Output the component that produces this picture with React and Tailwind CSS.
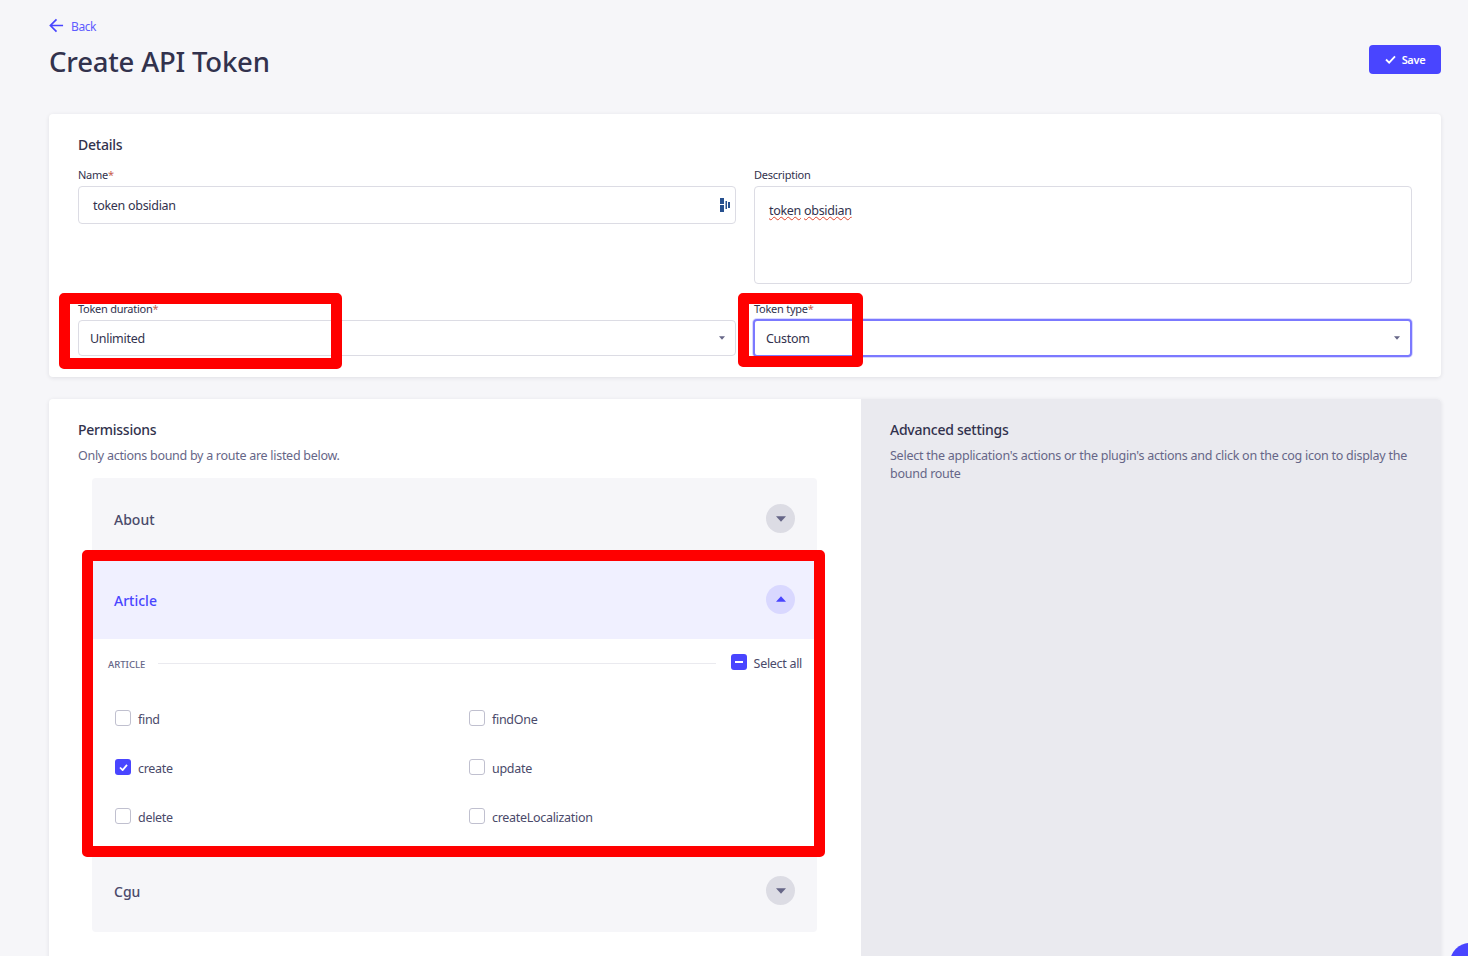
import React from 'react';

const Caret = ({ up = false, className = '' }) => (
  <svg viewBox="0 0 14 8" className={className} fill="currentColor">
    {up ? <path d="M7 0l7 8H0z" /> : <path d="M7 8L0 0h14z" />}
  </svg>
);

const Field = ({ label, required, children }) => (
  <div className="flex flex-col">
    <label className="text-[11px] tracking-[-0.25px] leading-[16px] text-[#32324d] mb-[3px]">
      {label}
      {required && <span className="text-[#c9614f]">*</span>}
    </label>
    {children}
  </div>
);

const SelectBox = ({ value, focused }) => (
  <div
    className={
      focused
        ? 'h-[38px] -mt-px -ml-px rounded-[4px] border-2 border-[#7b79ff] bg-white flex items-center justify-between pl-[11px] pr-[10px] shadow-[0_0_0_1px_#d9d8ff]'
        : 'h-[36px] rounded-[4px] border border-[#dcdce4] bg-white flex items-center justify-between pl-[11px] pr-[10px]'
    }
  >
    <span className="text-[12.500px] tracking-[-0.3px] pt-[3px] text-[#32324d]">{value}</span>
    <Caret className="w-[6px] h-[4px] text-[#666687]" />
  </div>
);

const AccordionRow = ({ title, open, last }) => (
  <div
    className={
      (open ? 'bg-[#f0f0ff] h-[78px] ' : 'bg-[#f6f6f9] ') +
      (last ? 'h-[79px] pb-[2px] rounded-b-[4px] ' : !open ? 'h-[83px] rounded-t-[4px] ' : '') +
      'flex items-center justify-between pl-[22px] pr-[22px]'
    }
  >
    <span className={(open ? 'text-[#4945ff] ' : 'text-[#4a4a6a] ') + 'text-[14px] font-medium'}>{title}</span>
    <span
      className={
        (open ? 'bg-[#d9d8ff] text-[#4945ff] ' : 'bg-[#dcdce4] text-[#666687] ') +
        'mb-[2px] w-[29px] h-[29px] rounded-full flex items-center justify-center'
      }
    >
      <Caret up={open} className="w-[10px] h-[6px]" />
    </span>
  </div>
);

const Check = ({ label, checked }) => (
  <div className="flex items-center gap-[7px] h-[49px]">
    {checked ? (
      <span className="mb-[3px] w-[16px] h-[16px] rounded-[3px] bg-[#4945ff] flex items-center justify-center">
        <svg viewBox="0 0 10 8" className="w-[9px] h-[7px]" fill="none" stroke="#fff" strokeWidth="2">
          <path d="M1 4l3 3 5-6" />
        </svg>
      </span>
    ) : (
      <span className="mb-[3px] w-[16px] h-[16px] rounded-[3px] border border-[#c0c0cf] bg-white" />
    )}
    <span className="text-[12.500px] tracking-[-0.3px] pt-[2px] text-[#4a4a6a]">{label}</span>
  </div>
);

const actions = [
  { label: 'find' },
  { label: 'findOne' },
  { label: 'create', checked: true },
  { label: 'update' },
  { label: 'delete' },
  { label: 'createLocalization' },
];

export default function App() {
  return (
    <div className="relative h-[956px] overflow-hidden bg-[#f6f6f9] font-['Noto_Sans',sans-serif]">
      {/* header */}
      <div className="pl-[49px] pr-[27px] pt-[17px] h-[114px]">
        <div className="flex items-center gap-[7px] h-[18px] text-[#4945ff]">
          <svg viewBox="0 0 16 16" className="w-[15px] h-[15px] -mt-[2px]" fill="none" stroke="currentColor" strokeWidth="1.8">
            <path d="M15 8H1.500M8 1.500L1.500 8 8 14.500" />
          </svg>
          <span className="text-[12px] tracking-[-0.4px] text-[#5f5cff] pt-[2px]">Back</span>
        </div>
        <div className="flex items-start justify-between">
          <h1 className="text-[27.500px] tracking-[-0.2px] leading-[38px] mt-[8px] font-medium text-[#32324d]">Create API Token</h1>
          <button className="mt-[10px] w-[72px] h-[29px] rounded-[4px] bg-[#4945ff] text-white flex items-center justify-center gap-[6px]">
            <svg viewBox="0 0 12 10" className="w-[11px] h-[9px]" fill="none" stroke="currentColor" strokeWidth="2">
              <path d="M1 5l3.500 3.500L11 1.500" />
            </svg>
            <span className="text-[11px] tracking-[-0.3px] font-semibold pt-px">Save</span>
          </button>
        </div>
      </div>

      {/* details card */}
      <div className="mx-[27px] ml-[49px] h-[263px] rounded-[4px] bg-white shadow-[0_1px_4px_rgba(33,33,52,0.1)] px-[29px] pt-[21px]">
        <h2 className="text-[14px] tracking-[-0.25px] leading-[19px] font-medium text-[#32324d] mb-[13px]">Details</h2>
        <div className="grid grid-cols-2 gap-x-[18px]">
          <div className="h-[134px]">
            <Field label="Name" required>
              <div className="h-[38px] rounded-[4px] border border-[#dcdce4] bg-white flex items-center justify-between pl-[14px] pr-[5px]">
                <span className="text-[12.500px] tracking-[-0.3px] pt-[2px] text-[#32324d]">token obsidian</span>
                <svg viewBox="0 0 10 14" className="w-[10px] h-[14px]" fill="#27508f">
                  <rect x="0" y="0" width="4" height="6" />
                  <rect x="0" y="7" width="4" height="7" />
                  <rect x="5.500" y="3" width="1.500" height="8" />
                  <rect x="8" y="4" width="2" height="6" />
                </svg>
              </div>
            </Field>
          </div>
          <Field label="Description">
            <div className="h-[98px] rounded-[4px] border border-[#dcdce4] bg-white pl-[14px] pt-[14px] text-[12.500px] tracking-[-0.3px] leading-[20px] text-[#32324d]">
              <span className="underline decoration-wavy decoration-[#e0442c] decoration-1">token</span>{' '}
              <span className="underline decoration-wavy decoration-[#e0442c] decoration-1">obsidian</span>
            </div>
          </Field>
          <Field label="Token duration" required>
            <SelectBox value="Unlimited" />
          </Field>
          <Field label="Token type" required>
            <SelectBox value="Custom" focused />
          </Field>
        </div>
      </div>

      {/* permissions */}
      <div className="ml-[49px] mr-[27px] mt-[22px] h-[640px] rounded-t-[4px] bg-white shadow-[0_1px_4px_rgba(33,33,52,0.1)] flex">
        <div className="w-[812px] pl-[29px] pr-[44px] pt-[21px]">
          <h2 className="text-[14px] tracking-[-0.25px] leading-[20px] font-medium text-[#32324d]">Permissions</h2>
          <p className="text-[12.500px] tracking-[-0.28px] leading-[18px] mt-[7px] -mb-px text-[#666687]">Only actions bound by a route are listed below.</p>
          <div className="mt-[14px] ml-[14px]">
            <AccordionRow title="About" />
            <AccordionRow title="Article" open />
            <div className="h-[214px] bg-white px-[15px]">
              <div className="flex items-center h-[48px]">
                <span className="text-[9.500px] font-medium text-[#666687] mt-[5px] pl-px w-[51px] shrink-0">ARTICLE</span>
                <div className="flex-1 h-px bg-[#eaeaef]" />
                <div className="flex items-center gap-[7px] ml-[15px]">
                  <span className="mb-[2px] w-[16px] h-[16px] rounded-[3px] bg-[#4945ff] flex items-center justify-center">
                    <span className="w-[8px] h-[2px] bg-white" />
                  </span>
                  <span className="text-[12.500px] tracking-[-0.3px] text-[#4a4a6a] pt-[2px]">Select all</span>
                </div>
              </div>
              <div className="grid grid-cols-[354px_1fr] mt-[8px] pl-[8px]">
                {actions.map((a) => (
                  <Check key={a.label} label={a.label} checked={a.checked} />
                ))}
              </div>
            </div>
            <AccordionRow title="Cgu" last />
          </div>
        </div>
        <div className="flex-1 rounded-tr-[4px] bg-[#eaeaef] pl-[29px] pr-[30px] pt-[21px]">
          <h2 className="text-[14px] tracking-[-0.25px] leading-[20px] font-medium text-[#32324d]">Advanced settings</h2>
          <p className="text-[12.500px] tracking-[-0.25px] leading-[18px] mt-[7px] text-[#666687]">
            Select the application's actions or the plugin's actions and click on the cog icon to display the bound route
          </p>
        </div>
      </div>

      {/* red annotation boxes */}
      <div className="absolute left-[59px] top-[293px] w-[283px] h-[76px] rounded-[5px] border-[11px] border-[#ff0000]" />
      <div className="absolute left-[738px] top-[293px] w-[125px] h-[74px] rounded-[5px] border-[11px] border-[#ff0000]" />
      <div className="absolute left-[82px] top-[550px] w-[743px] h-[307px] rounded-[5px] border-[11px] border-[#ff0000]" />

      {/* help bubble cut off at the corner */}
      <div className="absolute left-[1450px] top-[943px] w-[40px] h-[40px] rounded-full bg-[#4945ff]" />
    </div>
  );
}
